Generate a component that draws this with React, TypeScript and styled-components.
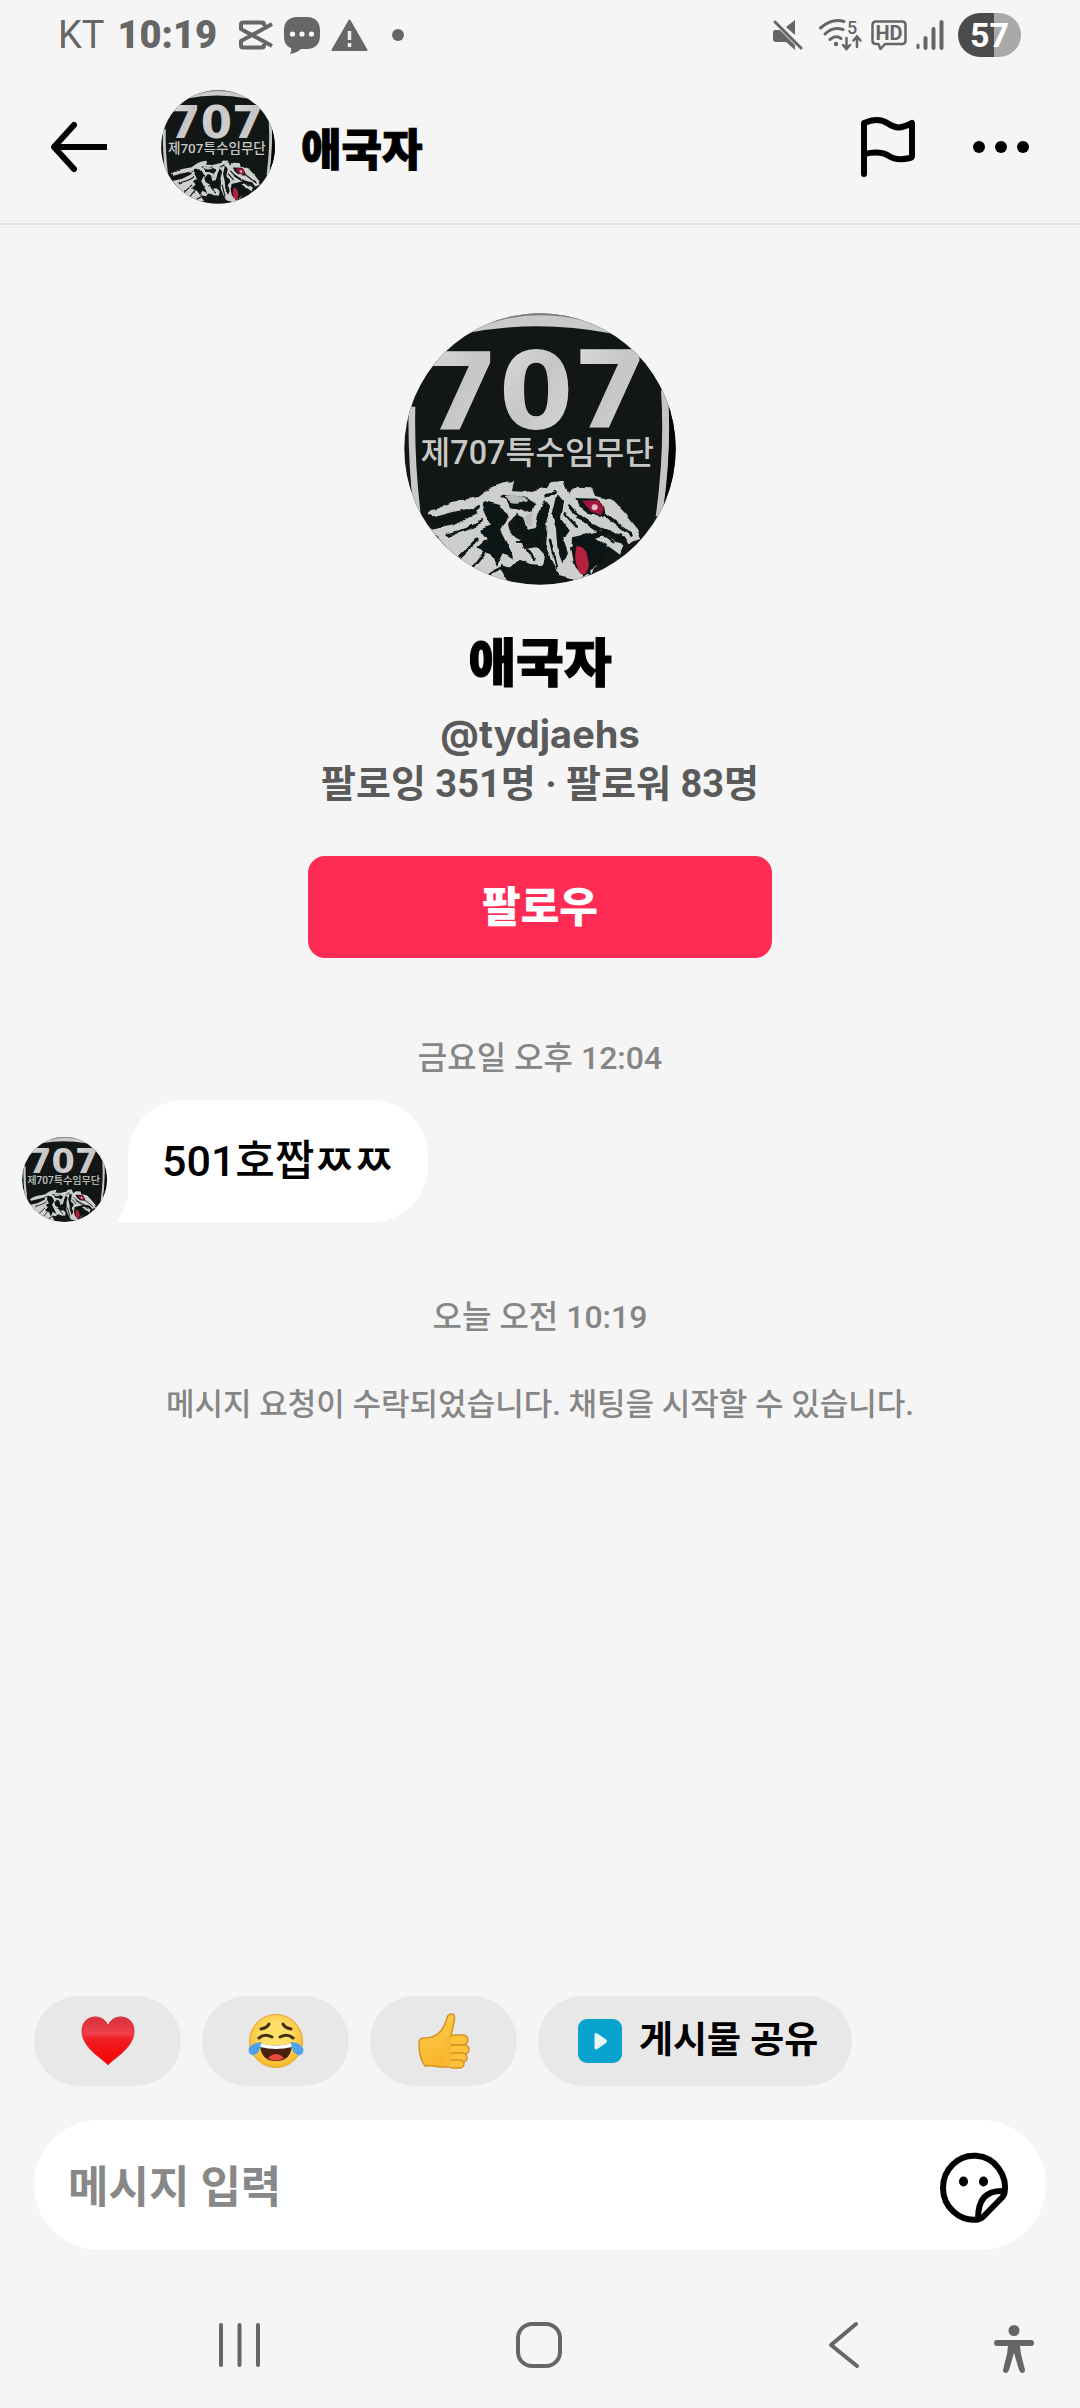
import React from "react";
import styled, { createGlobalStyle } from "styled-components";

const color = {
  page: "#f5f5f5",
  white: "#ffffff",
  ink: "#000000",
  system: "#666666",
  soft: "#5a5a5a",
  muted: "#868686",
  chip: "#e8e8e8",
  line: "#e2e2e2",
  brand: "#fe2c55",
};

const GlobalStyle = createGlobalStyle`
  *, *::before, *::after { box-sizing: border-box; }
  body {
    margin: 0;
    background: ${color.page};
    color: ${color.ink};
    font-family: Roboto, "Noto Sans CJK KR", sans-serif;
  }
  button, input { font: inherit; color: inherit; }
  svg { display: block; flex: none; overflow: visible; }
`;

const Screen = styled.div`
  display: flex;
  flex-direction: column;
  min-height: 100vh;
`;

const StatusBar = styled.div`
  display: flex;
  align-items: center;
  justify-content: space-between;
  height: 70px;
  padding: 0 59px 0 58px;
  color: ${color.system};
`;

const StatusGroup = styled.div<{ $gap: number }>`
  display: flex;
  align-items: center;
  gap: ${(p) => p.$gap}px;
`;

const StatusText = styled.span<{ $weight: number }>`
  font-size: 38px;
  line-height: 44px;
  font-weight: ${(p) => p.$weight};
`;

const Clock = styled(StatusGroup)`
  margin-right: 8px;
`;

const DotSlot = styled.span`
  padding-left: 13px;
`;

const MuteSlot = styled.span`
  margin-right: 7px;
`;

const Battery = styled.div`
  width: 63px;
  height: 44px;
  margin-left: 5px;
  border-radius: 22px;
  background: linear-gradient(90deg, #4b4b4b 57%, #a9a9a9 57%);
  color: ${color.white};
  font-size: 34px;
  line-height: 44px;
  font-weight: 700;
  text-align: center;
`;

const Header = styled.header`
  display: flex;
  align-items: center;
  height: 155px;
  padding: 0 51px;
  border-bottom: 2px solid ${color.line};
`;

const IconButton = styled.button`
  display: flex;
  align-items: center;
  justify-content: center;
  padding: 0;
  border: 0;
  background: none;
  cursor: pointer;
`;

const HeaderTitle = styled.h1`
  flex: 1;
  margin: 0;
  padding: 8px 0 0 26px;
  font-size: 44px;
  line-height: 60px;
  font-weight: 900;
  -webkit-text-stroke: 1px currentColor;
`;

const HeaderAvatar = styled.div`
  margin-left: 54px;
`;

const HeaderActions = styled.div`
  display: flex;
  align-items: center;
  gap: 58px;
`;

const Conversation = styled.main`
  flex: 1;
  display: flex;
  flex-direction: column;
`;

const Profile = styled.section`
  display: flex;
  flex-direction: column;
  align-items: center;
  padding-top: 88px;
`;

const ProfileName = styled.h2`
  margin: 48px 0 12px;
  font-size: 52px;
  line-height: 64px;
  font-weight: 900;
  -webkit-text-stroke: 1px currentColor;
`;

const ProfileLine = styled.p`
  margin: 0;
  color: ${color.soft};
  font-size: 38px;
  line-height: 50px;
  font-weight: 700;
`;

const Handle = styled(ProfileLine)`
  font-family: Inter, Roboto, sans-serif;
`;

const FollowButton = styled.button`
  width: 43%;
  height: 102px;
  margin-top: 47px;
  padding: 2px 0 0;
  border: 0;
  border-radius: 17px;
  background: ${color.brand};
  color: ${color.white};
  font-size: 42px;
  line-height: 60px;
  font-weight: 900;
  cursor: pointer;
`;

const Notice = styled.p<{ $top: number; $size: number }>`
  margin: ${(p) => p.$top}px 0 0;
  color: ${color.muted};
  font-size: ${(p) => p.$size}px;
  line-height: 40px;
  font-weight: 500;
  text-align: center;
`;

const MessageRow = styled.div`
  display: flex;
  align-items: flex-end;
  gap: 21px;
  margin-top: 22px;
  padding: 0 22px;
`;

const Bubble = styled.div`
  position: relative;
  padding: 31px 34px;
  border-radius: 56px 56px 56px 0;
  background: ${color.white};
  font-size: 43px;
  line-height: 60px;
  font-weight: 500;
`;

const BubbleTail = styled.svg`
  position: absolute;
  left: -11px;
  bottom: 0;
`;

const Composer = styled.footer`
  display: flex;
  flex-direction: column;
  gap: 34px;
  padding: 0 34px;
`;

const ChipRow = styled.div`
  display: flex;
  gap: 21px;
`;

const Chip = styled.button<{ $wide?: boolean }>`
  display: flex;
  align-items: center;
  justify-content: center;
  gap: 17px;
  height: 90px;
  min-width: 147px;
  padding: 0 ${(p) => (p.$wide ? 34 : 0)}px 0 ${(p) => (p.$wide ? 40 : 0)}px;
  border: 0;
  border-radius: 45px;
  background: ${color.chip};
  font-size: 37px;
  line-height: 50px;
  font-weight: 700;
  white-space: nowrap;
  cursor: pointer;
`;

const InputBar = styled.label`
  display: flex;
  align-items: center;
  height: 130px;
  padding: 6px 38px 0 34px;
  border-radius: 65px;
  background: ${color.white};
`;

const MessageInput = styled.input`
  flex: 1;
  min-width: 0;
  height: 60px;
  padding: 0;
  border: 0;
  outline: 0;
  background: none;
  font-size: 44px;
  font-weight: 700;
  &::placeholder {
    color: #888888;
    opacity: 1;
  }
`;

const NavBar = styled.nav`
  display: grid;
  grid-template-columns: 1fr 1fr 1fr 47px;
  align-items: center;
  height: 158px;
  padding: 32px 43px 0 89px;
  color: ${color.system};
`;

const NavA11y = styled(IconButton)`
  padding-top: 8px;
`;

function Avatar({ size, id }: { size: number; id: string }) {
  const clip = `${id}-clip`;
  const thread = `${id}-thread`;
  const ragged = `${id}-ragged`;
  return (
    <svg width={size} height={size} viewBox="42 39 816 816" role="img" aria-label="애국자">
      <defs>
        <clipPath id={clip}>
          <circle cx="450" cy="447" r="407" />
        </clipPath>
        <linearGradient id={thread} x1="0" y1="0" x2="1" y2="1">
          <stop offset="0" stopColor="#dedede" />
          <stop offset="0.5" stopColor="#c6c6c6" />
          <stop offset="1" stopColor="#dadada" />
        </linearGradient>
        <filter id={ragged} x="0" y="0" width="1" height="1">
          <feTurbulence type="fractalNoise" baseFrequency="0.03" numOctaves="2" seed="4" result="noise" />
          <feDisplacementMap in="SourceGraphic" in2="noise" scale="16" xChannelSelector="R" yChannelSelector="G" />
        </filter>
      </defs>
      <g clipPath={`url(#${clip})`}>
        <rect x="42" y="39" width="816" height="816" fill="#121614" />
        <path d="M230 100 Q440 58 660 100 L640 40 H260Z" fill="#c9cbc9" />
        <path d="M300 70 Q440 24 590 64 L560 30 H320Z" fill="#7e807e" />
        <path d="M66 320 Q62 480 84 660" fill="none" stroke="#c9c9c9" strokeWidth="20" />
        <path d="M824 270 Q836 450 808 650" fill="none" stroke="#c4c6c4" strokeWidth="22" />
        <path d="M848 280 Q860 450 832 640" fill="none" stroke="#050505" strokeWidth="28" />
        <g fill={`url(#${thread})`} fontFamily="'DejaVu Sans', sans-serif" fontWeight="700" fontSize="322" textAnchor="middle">
          <text x="214" y="386">7</text>
          <text x="438" y="384">0</text>
          <text x="662" y="382">7</text>
        </g>
        <text
          x="442"
          y="492"
          fill="#c6c8c6"
          fontFamily="Roboto, 'Noto Sans CJK KR', sans-serif"
          fontSize="97"
          fontWeight="500"
          textAnchor="middle"
        >
          제707특수임무단
        </text>
        <g filter={`url(#${ragged})`}>
          <g fill="#cdcfcd">
            <path d="M116 642 C150 606 210 602 262 592 C300 562 330 548 372 546 L366 572 L330 590 L372 612 L380 640 L352 668 L362 700 L392 716 L402 748 L440 742 L462 766 L456 796 L420 792 L392 780 L360 800 L330 792 L350 836 L300 838 L210 786 L150 720 L122 690 L190 676 L262 640 L256 620 L190 636 L130 652Z" />
            <path d="M336 572 L410 576 L470 562 L482 546 L520 544 L534 578 L560 560 L604 562 L612 588 L664 598 L700 634 L744 688 L756 716 L716 730 L694 700 L640 690 L600 700 L566 716 L540 742 L548 790 L600 826 L560 842 L510 828 L488 790 L468 740 L472 690 L452 650 L430 690 L400 700 L384 660 L368 620Z" />
            <path d="M600 720 L644 704 L700 736 L690 764 L660 742 L628 744 L622 790 L604 822 L590 800Z" />
          </g>
          <g fill="#101312">
            <path d="M286 600 L330 612 L352 650 L330 690 L356 742 L372 776 L338 760 L318 800 L300 760 L262 742 L290 716 L270 690 L300 676 L282 640Z" />
            <path d="M346 590 Q400 580 436 610 L420 640 L392 628 L360 622Z" />
            <path d="M376 638 L400 650 L410 690 L436 684 L446 640 L462 600 L480 620 L468 670 L448 712 L404 712 L380 680Z" />
            <path d="M500 580 L520 604 L510 650 L540 690 L520 720 L534 760 L520 790 L502 740 L498 690 L486 640Z" />
            <path d="M546 712 L600 700 L628 720 L648 736 L640 770 L604 812 L580 830 L556 800 L544 750Z" />
            <path d="M556 594 L620 596 L650 622 L640 652 L600 646 L570 622Z" />
          </g>
          <g fill="none" stroke="#101312" strokeWidth="8" strokeLinecap="round">
            <path d="M130 664 Q220 652 270 616 M170 704 Q240 690 274 664" />
            <path d="M540 620 Q580 670 690 712 M560 650 Q610 680 670 726 M640 640 L724 706" />
            <path d="M384 594 L410 602 M470 590 L494 574 M524 640 L560 680 M210 770 L262 720 M250 800 L290 750 M412 750 L432 776" />
            <path d="M384 724 L440 728 M480 720 L500 800 M300 820 L340 800" />
          </g>
          <path d="M344 592 Q380 578 412 600 Q392 612 362 606Z M404 650 L430 640 L426 680 L408 674Z" fill="#b9bbb9" />
        </g>
        <path d="M576 602 L624 600 L642 624 L632 646 L602 634Z" fill="#a3183a" />
        <circle cx="614" cy="622" r="9" fill="#e7b8c2" />
        <path d="M560 738 Q590 738 594 780 Q602 800 586 822 Q566 828 562 800 Q550 780 560 738Z" fill="#b5203f" />
      </g>
    </svg>
  );
}

const CutIcon = () => (
  <svg width="37" height="30" viewBox="0 0 37 30" fill="none" stroke="currentColor" strokeWidth="4" strokeLinejoin="round">
    <path d="M36 4 27 9 5 21v4.500q0 2 2 2h19q2 0 2-2V24M36 26 27 21 5 9V4.500q0-2 2-2h19q2 0 2 2V6" />
  </svg>
);

const ChatIcon = () => (
  <svg width="36" height="36" viewBox="0 0 36 36">
    <path d="M13 0h10c8 0 13 5 13 13v6c0 8-5 13-13 13h-6q-4 4-11 5 2-3 1-6C2 29 0 25 0 19v-6C0 5 5 0 13 0Z" fill="currentColor" />
    <g fill="#fff">
      <circle cx="8.500" cy="17" r="2.600" />
      <circle cx="18" cy="17" r="2.600" />
      <circle cx="27.500" cy="17" r="2.600" />
    </g>
  </svg>
);

const WarningIcon = () => (
  <svg width="37" height="33" viewBox="0 0 37 33">
    <path d="M18.500 1.500 35.500 31H1.500Z" fill="currentColor" stroke="currentColor" strokeWidth="2" strokeLinejoin="round" />
    <path d="M18.500 12v9M18.500 24v4" stroke="#ededed" strokeWidth="3.500" />
  </svg>
);

const DotIcon = () => (
  <svg width="12" height="12" viewBox="0 0 12 12">
    <circle cx="6" cy="6" r="6" fill="currentColor" />
  </svg>
);

const MuteIcon = () => (
  <svg width="30" height="30" viewBox="0 0 30 30">
    <path d="M13 7 22 0v15ZM2 10h5l15 15v5l-9-8H3q-3 0-3-3v-6q0-3 2-3Z" fill="currentColor" />
    <path d="M2 2 28 28" stroke="currentColor" strokeWidth="3" strokeLinecap="round" />
  </svg>
);

const WifiIcon = () => (
  <svg width="43" height="32" viewBox="0 0 43 32" fill="none" stroke="currentColor" strokeWidth="3" strokeLinecap="round">
    <path d="M1.500 9Q13-1 25 2.500M6 15Q14 7 24 10.500M11 20.500q6-5 11-1" />
    <circle cx="17" cy="25" r="1.500" fill="currentColor" strokeWidth="1.500" />
    <path d="M27.500 19v10M24 26l3.500 4 3.500-4M38 28V18M34.500 21.500 38 17.500l3.500 4" strokeWidth="2.500" />
    <text x="28" y="15" fontSize="18" fontWeight="500" fill="currentColor" stroke="none">5</text>
  </svg>
);

const HdIcon = () => (
  <svg width="36" height="30" viewBox="0 0 36 30">
    <path
      d="M5 1.500h26q3.500 0 3.500 3.500v15.500q0 3.500-3.500 3.500H14l-4.500 5-2-5H5q-3.500 0-3.500-3.500V5Q1.500 1.500 5 1.500Z"
      fill="none"
      stroke="currentColor"
      strokeWidth="2.500"
      strokeLinejoin="round"
    />
    <text x="18" y="20" fontSize="20" fontWeight="700" textAnchor="middle" fill="currentColor">HD</text>
  </svg>
);

const SignalIcon = () => (
  <svg width="28" height="30" viewBox="0 0 28 30" stroke="currentColor" strokeWidth="4" strokeLinecap="round">
    <path d="M2 25v2.500" strokeWidth="3" />
    <path d="M9.500 18v10M17.500 9v19M25.500 2v26" />
  </svg>
);

const BackArrowIcon = () => (
  <svg width="56" height="50" viewBox="0 0 56 50" fill="none" stroke="currentColor" strokeWidth="6" strokeLinecap="round" strokeLinejoin="round">
    <path d="M23 3 3 25l20 22M3 25" />
    <path d="M3 25h53" strokeLinecap="butt" />
  </svg>
);

const FlagIcon = () => (
  <svg width="54" height="60" viewBox="0 0 54 60" fill="none" stroke="currentColor" strokeWidth="6" strokeLinejoin="round" strokeLinecap="round">
    <path d="M3 57V6C13 1.500 20 1.500 27 6.500S40 12 51 6v33q0 1.500-2 2c-9 2-16 1.500-21-2s-12-5-25-2" />
  </svg>
);

const MoreIcon = () => (
  <svg width="56" height="12" viewBox="0 0 56 12" fill="currentColor">
    <circle cx="6" cy="6" r="6" />
    <circle cx="28" cy="6" r="6" />
    <circle cx="50" cy="6" r="6" />
  </svg>
);

const HeartIcon = () => (
  <svg width="54" height="50" viewBox="0 0 54 50">
    <defs>
      <linearGradient id="heart" x1="0" y1="0" x2="0" y2="1">
        <stop offset="0" stopColor="#d6303a" />
        <stop offset="0.350" stopColor="#f0404a" />
        <stop offset="0.450" stopColor="#ee1f24" />
        <stop offset="1" stopColor="#fb0000" />
      </linearGradient>
    </defs>
    <path d="M27 49C21 42 1 32 1 15 1 6 7 1 14 1c6 0 11 3 13 9 2-6 7-9 13-9 7 0 13 5 13 14 0 17-20 27-26 34Z" fill="url(#heart)" stroke="#d9343c" strokeWidth="1" />
  </svg>
);

const JoyIcon = () => (
  <svg width="56" height="56" viewBox="0 0 56 56">
    <defs>
      <radialGradient id="joy" cx="0.500" cy="0.400" r="0.600">
        <stop offset="0.400" stopColor="#fee069" />
        <stop offset="1" stopColor="#f7b52b" />
      </radialGradient>
    </defs>
    <circle cx="28" cy="28" r="26.500" fill="url(#joy)" stroke="#e6a532" strokeWidth="1" />
    <g fill="none" stroke="#45300e" strokeWidth="3" strokeLinecap="round">
      <path d="M13 16q6-1 8-5M43 16q-6-1-8-5M11 25q6-5 13-1M45 25q-6-5-13-1" />
    </g>
    <path d="M12 30q16 5 32 0 0 18-16 18T12 30Z" fill="#46210f" />
    <path d="M12 30q16 5 32 0v4q-16 4-32 0Z" fill="#fff" />
    <path d="M20 45q8-8 16 0-8 5-16 0Z" fill="#ea4a3c" />
    <path d="M13 29Q3 30 .500 36q0 7 6 6 6-2 6.500-13ZM43 29q10 1 12.500 7 0 7-6 6-6-2-6.500-13Z" fill="#4da2ea" />
  </svg>
);

const ThumbIcon = () => (
  <svg width="52" height="56" viewBox="0 0 52 56" stroke="#d59024" strokeWidth="1.500" strokeLinejoin="round">
    <defs>
      <linearGradient id="thumb" x1="0" y1="0" x2="0.300" y2="1">
        <stop offset="0" stopColor="#fdd04e" />
        <stop offset="1" stopColor="#f8b62d" />
      </linearGradient>
    </defs>
    <path d="M1 30Q1 25 6 25c12 0 19-7 22-17 1-5 2-7 6-7 3 0 3 4 2 8l-3 14-3 31H21q-7-2-14-1-6-7-6-23Z" fill="url(#thumb)" />
    <g fill="#fbc23a">
      <rect x="31" y="22" width="19" height="10" rx="5" />
      <rect x="31" y="32" width="20" height="9" rx="4.500" />
      <rect x="31" y="40" width="18" height="9" rx="4.500" />
      <rect x="30" y="47" width="16" height="8" rx="4" />
    </g>
    <path d="M26 24q5 2 7-1v30h-8q5-12 1-29Z" fill="#f9b934" stroke="none" />
  </svg>
);

const PostIcon = () => (
  <svg width="44" height="44" viewBox="0 0 44 44">
    <rect width="44" height="44" rx="9" fill="#05a3cd" />
    <path d="M16.500 15.500v13q0 3 3 1.500l8.500-6q2-2 0-3.500l-8.500-6q-3-1.500-3 1Z" fill="#e9f6fa" />
  </svg>
);

const StickerIcon = () => (
  <svg width="68" height="70" viewBox="0 0 68 70" fill="none" stroke="currentColor" strokeWidth="6" strokeLinejoin="round">
    <path d="M64.500 40.500A31 32 0 1 0 38 66.500Q41 66 43 64L62 44.500Q64 42.500 64.500 39.500Z" />
    <path d="M64.500 38C46 37 38 46 38 66" />
    <ellipse cx="23.500" cy="28.500" rx="4.500" ry="5" fill="currentColor" stroke="none" />
    <ellipse cx="43.500" cy="28.500" rx="4.500" ry="5" fill="currentColor" stroke="none" />
  </svg>
);

const RecentsIcon = () => (
  <svg width="41" height="44" viewBox="0 0 41 44" stroke="currentColor" strokeWidth="4" strokeLinecap="round">
    <path d="M2 2v40M20.500 2v40M39 2v40" />
  </svg>
);

const HomeIcon = () => (
  <svg width="46" height="46" viewBox="0 0 46 46" fill="none" stroke="currentColor" strokeWidth="4">
    <rect x="2" y="2" width="42" height="42" rx="14" />
  </svg>
);

const NavBackIcon = () => (
  <svg width="46" height="46" viewBox="0 0 46 46" fill="none" stroke="currentColor" strokeWidth="4" strokeLinecap="round" strokeLinejoin="round">
    <path d="M39 2 14 23l26 21" />
  </svg>
);

const AccessibilityIcon = () => (
  <svg width="40" height="48" viewBox="0 0 40 48" fill="currentColor">
    <circle cx="20" cy="5.500" r="5.500" />
    <path d="M3 15h34q3 0 3 3t-3 3H26l1 8 4 16q0 3-3 3-2 0-3-3l-5-17-5 17q-1 3-3 3-3 0-3-3l4-16 1-8H3q-3 0-3-3t3-3Z" />
  </svg>
);

export default function App() {
  return (
    <Screen>
      <GlobalStyle />
      <StatusBar>
        <StatusGroup $gap={11}>
          <Clock $gap={13}>
            <StatusText $weight={400}>KT</StatusText>
            <StatusText $weight={900}>10:19</StatusText>
          </Clock>
          <CutIcon />
          <ChatIcon />
          <WarningIcon />
          <DotSlot>
            <DotIcon />
          </DotSlot>
        </StatusGroup>
        <StatusGroup $gap={9}>
          <MuteSlot>
            <MuteIcon />
          </MuteSlot>
          <WifiIcon />
          <HdIcon />
          <SignalIcon />
          <Battery>57</Battery>
        </StatusGroup>
      </StatusBar>

      <Header>
        <IconButton type="button" aria-label="뒤로">
          <BackArrowIcon />
        </IconButton>
        <HeaderAvatar>
          <Avatar size={114} id="header-avatar" />
        </HeaderAvatar>
        <HeaderTitle>애국자</HeaderTitle>
        <HeaderActions>
          <IconButton type="button" aria-label="신고">
            <FlagIcon />
          </IconButton>
          <IconButton type="button" aria-label="더보기">
            <MoreIcon />
          </IconButton>
        </HeaderActions>
      </Header>

      <Conversation>
        <Profile>
          <Avatar size={272} id="profile-avatar" />
          <ProfileName>애국자</ProfileName>
          <Handle>@tydjaehs</Handle>
          <ProfileLine>팔로잉 351명 · 팔로워 83명</ProfileLine>
          <FollowButton type="button">팔로우</FollowButton>
        </Profile>
        <Notice $top={80} $size={32}>금요일 오후 12:04</Notice>
        <MessageRow>
          <Avatar size={85} id="message-avatar" />
          <Bubble>
            <BubbleTail width="12" height="40" viewBox="0 0 12 40" fill="#ffffff" aria-hidden="true">
              <path d="M12 0Q12 24 1 36-1 40 4 40H12Z" />
            </BubbleTail>
            501호짭ㅉㅉ
          </Bubble>
        </MessageRow>
        <Notice $top={75} $size={32}>오늘 오전 10:19</Notice>
        <Notice $top={48} $size={31}>메시지 요청이 수락되었습니다. 채팅을 시작할 수 있습니다.</Notice>
      </Conversation>

      <Composer>
        <ChipRow>
          <Chip type="button" aria-label="하트">
            <HeartIcon />
          </Chip>
          <Chip type="button" aria-label="웃음">
            <JoyIcon />
          </Chip>
          <Chip type="button" aria-label="좋아요">
            <ThumbIcon />
          </Chip>
          <Chip type="button" $wide>
            <PostIcon />
            게시물 공유
          </Chip>
        </ChipRow>
        <InputBar>
          <MessageInput type="text" placeholder="메시지 입력" aria-label="메시지 입력" />
          <IconButton type="button" aria-label="스티커">
            <StickerIcon />
          </IconButton>
        </InputBar>
      </Composer>

      <NavBar>
        <IconButton type="button" aria-label="최근 앱">
          <RecentsIcon />
        </IconButton>
        <IconButton type="button" aria-label="홈">
          <HomeIcon />
        </IconButton>
        <IconButton type="button" aria-label="뒤로 가기">
          <NavBackIcon />
        </IconButton>
        <NavA11y type="button" aria-label="접근성">
          <AccessibilityIcon />
        </NavA11y>
      </NavBar>
    </Screen>
  );
}
